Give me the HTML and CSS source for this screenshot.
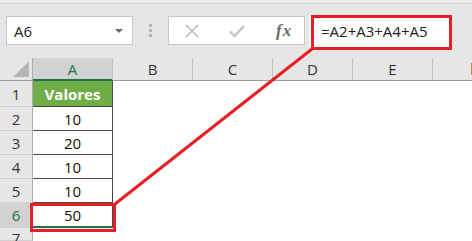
FILE: index.html
```html
<!DOCTYPE html>
<html>
  <head>
    <meta charset="UTF-8" />
    <title>Soma</title>
    <link rel="stylesheet" href="styles.css">
  </head>
  <body>
    <div class="sheet">
      <div class="formula-row">
        <div class="name-box">
          <span>A6</span>
          <span class="caret"></span>
        </div>
        <div class="grip"><i></i><i></i><i></i></div>
        <div class="fx-buttons">
          <svg class="btn-icon" width="14" height="14" viewBox="0 0 14 14">
            <path d="M1 1 L13 13 M13 1 L1 13" stroke="#b9b9b9" stroke-width="1.6" fill="none" />
          </svg>
          <svg class="btn-icon" width="16" height="14" viewBox="0 0 16 14">
            <path d="M1 7.5 L5.5 12 L15 2" stroke="#c4c4c4" stroke-width="2.4" fill="none" />
          </svg>
          <span class="fx">fx</span>
        </div>
        <div class="formula-input">=A2+A3+A4+A5</div>
      </div>

      <div class="grid">
        <div class="corner"><span class="tri"></span></div>
        <div class="col-head selected">A</div>
        <div class="col-head">B</div>
        <div class="col-head">C</div>
        <div class="col-head">D</div>
        <div class="col-head">E</div>
        <div class="col-head last"><span class="edge-mark"></span></div>

        <div class="row-head">1</div>
        <div class="cell title">Valores</div>
        <div class="cell"></div><div class="cell"></div><div class="cell"></div><div class="cell"></div><div class="cell"></div>

        <div class="row-head">2</div>
        <div class="cell num">10</div>
        <div class="cell"></div><div class="cell"></div><div class="cell"></div><div class="cell"></div><div class="cell"></div>

        <div class="row-head">3</div>
        <div class="cell num">20</div>
        <div class="cell"></div><div class="cell"></div><div class="cell"></div><div class="cell"></div><div class="cell"></div>

        <div class="row-head">4</div>
        <div class="cell num">10</div>
        <div class="cell"></div><div class="cell"></div><div class="cell"></div><div class="cell"></div><div class="cell"></div>

        <div class="row-head">5</div>
        <div class="cell num">10</div>
        <div class="cell"></div><div class="cell"></div><div class="cell"></div><div class="cell"></div><div class="cell"></div>

        <div class="row-head selected">6</div>
        <div class="cell num active">50</div>
        <div class="cell"></div><div class="cell"></div><div class="cell"></div><div class="cell"></div><div class="cell"></div>

        <div class="row-head top">7</div>
        <div class="cell"></div>
        <div class="cell"></div><div class="cell"></div><div class="cell"></div><div class="cell"></div><div class="cell"></div>
      </div>
    </div>

    <!-- red markup drawn over the screenshot -->
    <svg class="annot" width="472" height="241" viewBox="0 0 472 241">
      <rect x="312.5" y="16.5" width="138" height="32" fill="none" stroke="#e81e25" stroke-width="3" />
      <rect x="31.5" y="204.5" width="83" height="26" fill="none" stroke="#e81e25" stroke-width="3" />
      <line x1="115" y1="204" x2="312" y2="49" stroke="#e81e25" stroke-width="3" />
    </svg>
  </body>
</html>
```

FILE: styles.css
```css
html, body {
  margin: 0;
  padding: 0;
  width: 472px;
  height: 241px;
  overflow: hidden;
  background: #e6e6e6;
  font-family: "Open Sans", "Noto Sans", sans-serif;
  color: #222;
}

.sheet {
  display: flex;
  flex-direction: column;
  height: 241px;
  border-top: 3px solid #ececec;
  box-sizing: border-box;
}

/* === formula bar === */
.formula-row {
  display: flex;
  flex-shrink: 0;
  align-items: flex-start;
  height: 55px;
  padding-top: 12px;
  box-sizing: border-box;
  border-top: 1px solid #d6d6d6;
}

.name-box {
  display: flex;
  align-items: center;
  justify-content: space-between;
  width: 127px;
  height: 29px;
  margin-left: 6px;
  padding: 0 9px 0 7px;
  box-sizing: border-box;
  background: #fff;
  border: 1px solid #c6c6c6;
  font-size: 15px;
}

.caret {
  width: 0;
  height: 0;
  border-left: 4px solid transparent;
  border-right: 4px solid transparent;
  border-top: 4px solid #6a6a6a;
}

.grip {
  display: flex;
  flex-direction: column;
  gap: 2px;
  width: 4px;
  margin: 8px 15px 0 16px;
}

.grip i {
  display: block;
  width: 3px;
  height: 3px;
  background: #b3b3b3;
}

.fx-buttons {
  display: flex;
  align-items: center;
  width: 137px;
  height: 29px;
  padding-left: 16px;
  box-sizing: border-box;
  background: #fff;
  border: 1px solid #c6c6c6;
}

.btn-icon {
  margin-right: 30px;
}

.btn-icon + .btn-icon {
  margin-right: 31px;
}

.fx {
  font-family: "Liberation Serif", serif;
  font-style: italic;
  font-weight: bold;
  font-size: 17px;
  color: #6b6b6b;
  letter-spacing: 1px;
}

.formula-input {
  width: 140px;
  height: 31px;
  margin-left: 4px;
  padding-left: 12px;
  box-sizing: border-box;
  background: #fff;
  font-size: 15px;
  line-height: 31px;
}

/* === worksheet === */
.grid {
  display: grid;
  grid-template-columns: 33px repeat(5, 80px) 1fr;
  grid-template-rows: 23px 26px 24px 24px 24px 24px 25px minmax(0, 1fr);
  background: #fff;
  flex: 1;
  min-height: 0;
  overflow: hidden;
}

.corner {
  position: relative;
  background: #e6e6e6;
  border-right: 1px solid #ababab;
  border-bottom: 1px solid #9b9b9b;
}

.tri {
  position: absolute;
  right: 3px;
  bottom: 3px;
  width: 0;
  height: 0;
  border-left: 16px solid transparent;
  border-bottom: 16px solid #b5b5b5;
}

.col-head {
  display: flex;
  align-items: center;
  justify-content: center;
  background: #e6e6e6;
  border-right: 1px solid #c2c2c2;
  border-bottom: 1px solid #9b9b9b;
  font-size: 15px;
  color: #333;
}

.col-head.selected {
  background: #d2d2d2;
  color: #217346;
  border-bottom: 2px solid #217346;
}

.col-head.last {
  justify-content: flex-start;
  padding-left: 38px;
  border-right: none;
}

.edge-mark {
  width: 2px;
  height: 12px;
  background: #c08a4a;
}

.row-head {
  display: flex;
  align-items: center;
  justify-content: center;
  background: #e6e6e6;
  border-right: 1px solid #ababab;
  border-bottom: 1px solid #d0d0d0;
  font-size: 15px;
  color: #333;
}

.row-head.top {
  align-items: flex-start;
  line-height: 16px;
  padding-top: 2px;
}

.row-head.selected {
  background: #d2d2d2;
  color: #217346;
}

.cell {
  display: flex;
  align-items: center;
  justify-content: center;
  font-size: 15px;
}

.cell.title {
  background: #70ad47;
  color: #fff;
  font-weight: bold;
  border-right: 1px solid #4a4a4a;
  border-bottom: 1px solid #4a4a4a;
}

.cell.num {
  border-right: 1px solid #4a4a4a;
  border-bottom: 1px solid #4a4a4a;
  color: #111;
}

.cell.active {
  border-bottom: 2px solid #217346;
}

.annot {
  position: absolute;
  top: 0;
  left: 0;
  pointer-events: none;
}
```
